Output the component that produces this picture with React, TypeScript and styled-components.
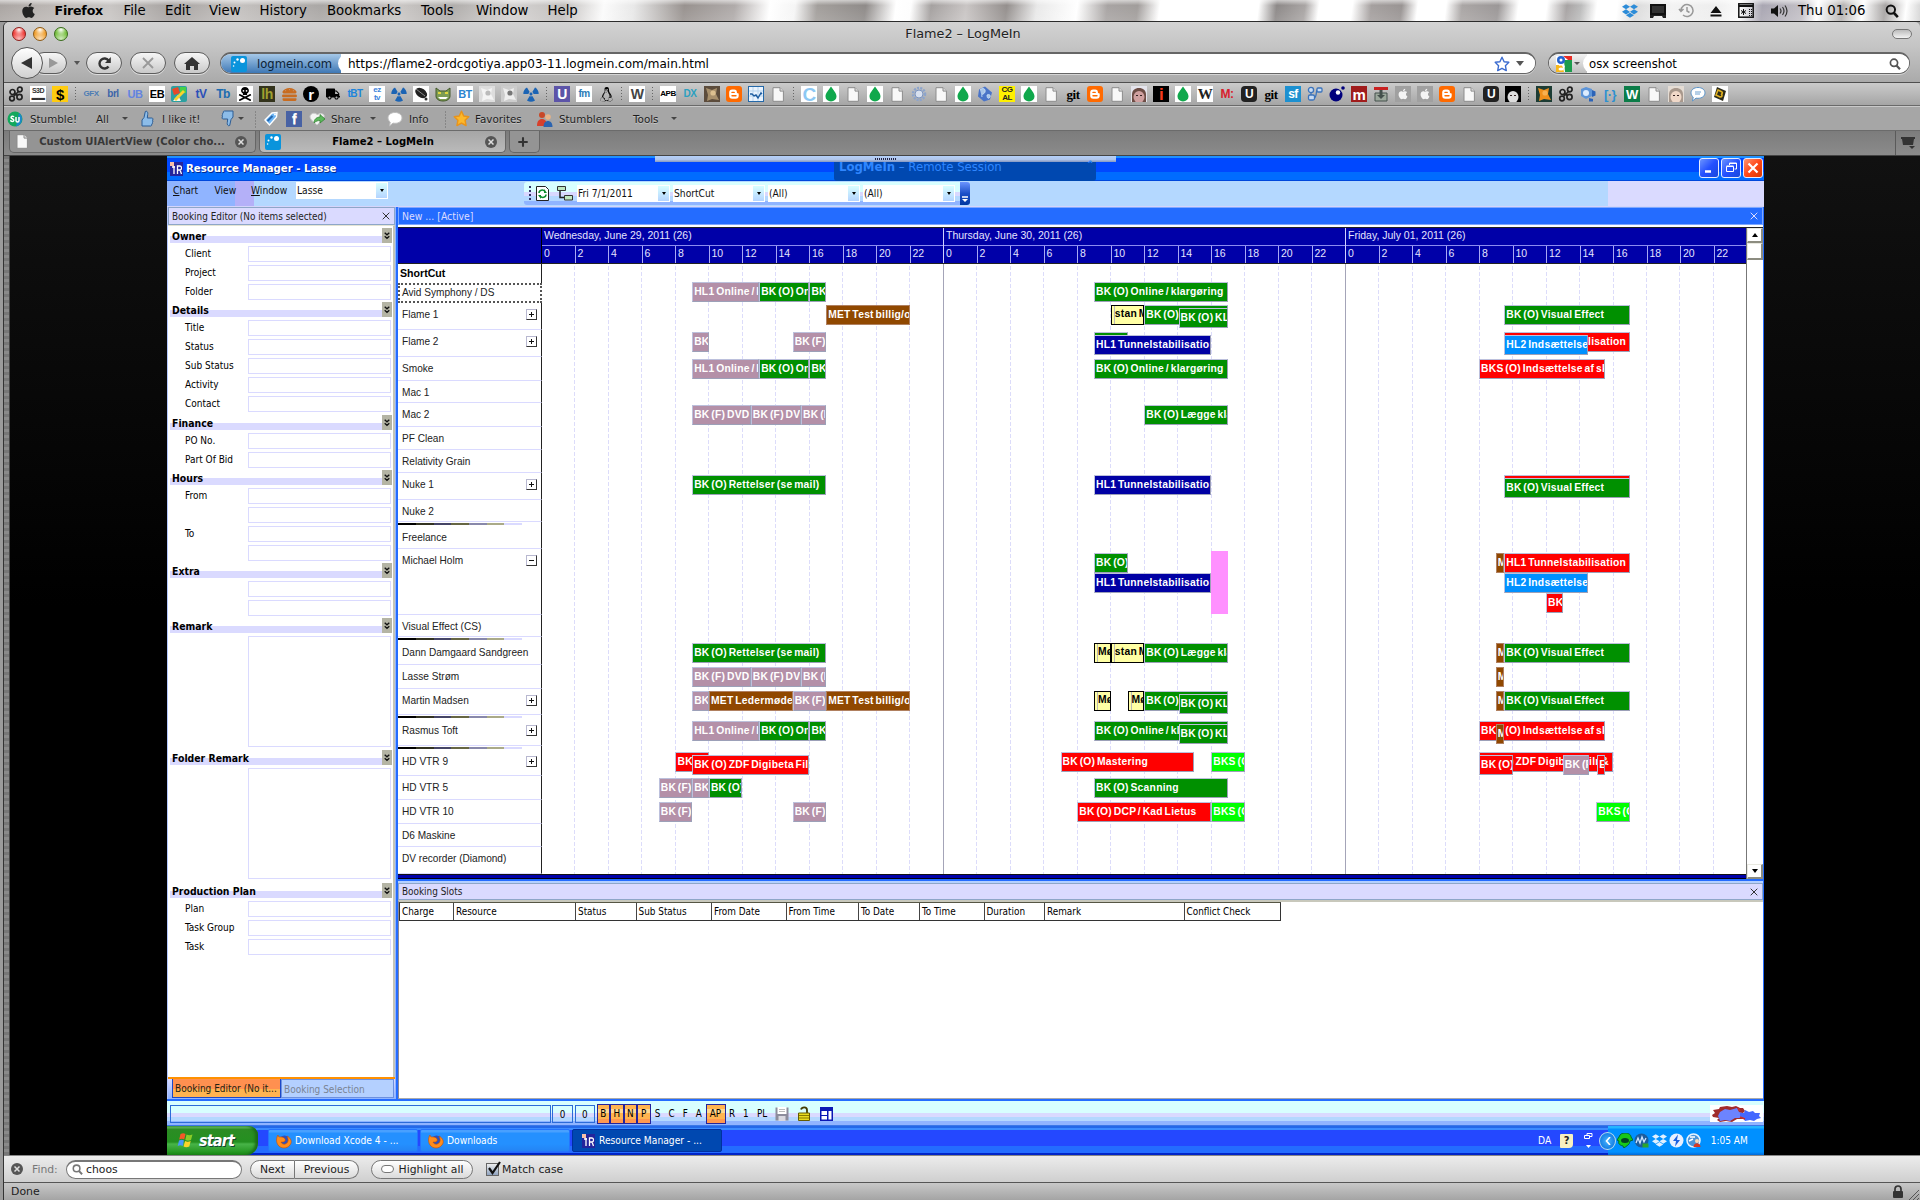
import React from 'react';
import styled, { createGlobalStyle, css } from 'styled-components';
import { FaApple, FaDropbox, FaRadiation, FaLinux, FaSkullCrossbones, FaHamburger, FaTruck } from 'react-icons/fa';

const MAC = '"DejaVu Sans", "Liberation Sans", sans-serif';
const XP = '"DejaVu Sans Condensed", "DejaVu Sans", sans-serif';
const ARIAL = '"Liberation Sans", Arial, sans-serif';

const Global = createGlobalStyle`
  * { box-sizing: border-box; }
  body { margin: 0; overflow: hidden; background: #9b9b9b; }
  svg { display: block; }
`;

/* ---------- generic pieces ---------- */

const Desktop = styled.div`
  width: 1920px; height: 1200px; display: flex; flex-direction: column;
  font-family: ${MAC}; color: #000; white-space: nowrap; overflow: hidden;
`;
const Slot = styled.div<{ $w: number; $center?: boolean }>`
  flex: none; width: ${p => p.$w}px; display: flex; align-items: center;
  justify-content: ${p => (p.$center ? 'center' : 'flex-start')};
`;
const Spacer = styled.div`flex: 1;`;
const Triangle = styled.i<{ $s: number; $c?: string; $up?: boolean }>`
  flex: none; width: 0; height: 0;
  border-left: ${p => p.$s}px solid transparent; border-right: ${p => p.$s}px solid transparent;
  ${p => (p.$up ? 'border-bottom' : 'border-top')}: ${p => p.$s * 1.3}px solid ${p => p.$c || '#000'};
`;

/* ---------- mac menu bar ---------- */

const MenuBar = styled.div`
  flex: none; height: 22px; display: flex; align-items: center; padding-left: 20px;
  border-bottom: 1px solid #2c2c2c; font-size: 13.3px;
  background:
    linear-gradient(180deg, rgba(255,255,255,.55), rgba(255,255,255,0) 25%, rgba(255,255,255,.12)),
    linear-gradient(97deg, #aaa5a2 0, #b9b4b1 40px, #c9c6c4 110px, #a7a3a1 170px, #c4c1bf 240px, #aaa7a5 320px,
      #c9c6c4 400px, #b0adab 450px, #d5d3d2 510px, #c2bfbd 560px, #fbfbfb 600px, #e8e8e8 630px, #98928f 680px, #b0abaa 730px,
      #fff 765px, #f5f5f5 790px, #a39f9c 812px, #8f8b89 860px, #fff 890px, #fdfdfd 905px, #a5a1a0 925px, #c9c5c4 960px,
      #948f8d 1000px, #e9e9e9 1030px, #fff 1070px, #a8a4a3 1100px, #a19d9b 1130px, #fff 1152px, #fff 1250px, #8d8988 1268px,
      #a9a5a4 1296px, #fff 1310px, #fff 1343px, #a5a09f 1362px, #999493 1392px, #fff 1408px, #fff 1436px, #aaa6a5 1452px,
      #9b9797 1488px, #fff 1508px, #fff 1536px, #a7a3a3 1556px, #bbb 1570px, #fff 1586px, #fff 1606px, #dcdcdc 1625px,
      #f3f3f3 1660px, #eee 1700px, #fafafa 1728px, #a9a6b2 1750px, #c3c0c6 1790px, #fff 1805px, #b5b2b1 1830px, #fff 1850px, #a7a4a3 1872px, #fff 1893px, #b3b3b3 1920px);
`;
const AppName = styled.b`letter-spacing: -0.2px; font-size: 12.6px;`;

/* ---------- browser chrome ---------- */

const Browser = styled.div`
  flex: 1; margin-left: 4px; display: flex; flex-direction: column; position: relative;
  border-top-left-radius: 5px; border-top-right-radius: 5px; overflow: hidden;
  background: linear-gradient(#d3d3d3, #c4c4c4 25px, #aaa 60px, #a6a6a6);
  box-shadow: -1px 0 0 #333;
`;
const TitleBar = styled.div`
  flex: none; height: 25px; display: grid; grid-template-columns: 120px 1fr 120px; align-items: center;
  font-size: 12.8px; padding: 0 6px 2px 8px;
`;
const Lights = styled.div`display: flex; gap: 7px;`;
const Light = styled.span<{ $c: string; $d: string }>`
  width: 14px; height: 14px; border-radius: 50%; border: 1px solid ${p => p.$d};
  background: radial-gradient(circle at 50% 15%, #fff 0, rgba(255,255,255,.2) 35%, transparent 50%),
    radial-gradient(circle at 50% 90%, #ffffffaa, transparent 60%), ${p => p.$c};
`;
const TitleText = styled.div`text-align: center; color: #222; text-shadow: 0 1px #ddd;`;
const Pill = styled.span`
  justify-self: end; width: 20px; height: 10px; border-radius: 5px; border: 1px solid #777;
  background: linear-gradient(#bbb, #f3f3f3); margin-right: 2px;
`;
const NavBar = styled.div`flex: none; height: 35px; display: flex; align-items: center; padding: 0 6px 3px 7px;`;
const Back = styled.div`
  width: 32px; height: 32px; border-radius: 50%; border: 1px solid #555; background: linear-gradient(#fff, #d0d0d0);
  display: flex; align-items: center; justify-content: center; z-index: 1;
`;
const NavButton = styled.div<{ $w?: number; $fwd?: boolean }>`
  width: ${p => p.$w || 36}px; height: 22px; border: 1px solid #5c5c5c; border-radius: 11px;
  background: linear-gradient(#f6f6f6, #c9c9c9); display: flex; align-items: center; justify-content: center;
  margin-right: ${p => (p.$fwd ? 0 : 8)}px;
  ${p => p.$fwd && css`margin-left: -10px; padding-left: 7px;`}
  box-shadow: 0 1px #ddd;
`;
const Field = styled.div<{ $w: number; $ml?: number }>`
  width: ${p => p.$w}px; margin-left: ${p => p.$ml || 0}px; height: 22px; border-radius: 11px; border: 1px solid #666; border-top-width: 2px;
  background: #fff; display: flex; align-items: center; overflow: hidden; font-size: 12px; box-shadow: 0 1px #d5d5d5;
`;
const Identity = styled.div`
  width: 120px; height: 100%; display: flex; align-items: center; gap: 10px; padding-left: 10px; font-size: 11.6px; color: #0b2236;
  background: linear-gradient(#a5c8e8, #3f78b5);
`;
const Url = styled.div<{ $search?: boolean }>`
  flex: 1; height: 100%; margin-left: ${p => (p.$search ? -4 : -3)}px; padding-left: ${p => (p.$search ? 6 : 10)}px;
  font-size: ${p => (p.$search ? 11.7 : 12)}px; border-radius: 10px 0 0 10px; background: #fff; display: flex; align-items: center;
`;
const Engine = styled.div`
  width: 38px; height: 100%; padding-left: 7px; display: flex; align-items: center; gap: 2px; background: linear-gradient(#f2f2f2, #bdbdbd);
`;
const BookmarkBar = styled.div`
  flex: none; height: 24px; display: flex; align-items: center; padding-left: 1px; border-top: 1px solid #4f4f4f;
  background: linear-gradient(#cbcbcb, #a5a5a5); border-bottom: 1px solid #6a6a6a;
`;
const BIcon = styled.div<{ $bg?: string; $fg?: string; $fs?: number; $serif?: boolean; $r?: number; $inner?: boolean }>`
  flex: none; width: 16px; height: 16px; margin: 0 ${p => (p.$inner ? 0 : 3)}px; border-radius: ${p => p.$r || 0}px;
  background: ${p => p.$bg || 'transparent'}; color: ${p => p.$fg || '#000'};
  font: 700 ${p => p.$fs || 10}px/1 ${p => (p.$serif ? '"Liberation Serif", serif' : ARIAL)};
  display: flex; align-items: center; justify-content: center; text-align: center; white-space: pre; letter-spacing: -0.5px;
`;
const DotSep = styled.i<{ $w?: number; $h?: number }>`
  flex: none; width: ${p => p.$w || 9}px; height: ${p => p.$h || 15}px; background: linear-gradient(#666 50%, transparent 50%) center/1px 3px repeat-y;
`;
const StumbleBar = styled.div`
  flex: none; height: 24px; display: flex; align-items: center; font-size: 10.35px; color: #1c1c1c; background: #a6a6a6;
  border-top: 1px solid #c9c9c9; padding-left: 3px; text-shadow: 0 1px #c4c4c4;
`;
const TabStrip = styled.div`
  flex: none; height: 26px; display: flex; align-items: flex-start; background: linear-gradient(#7c7c7c, #8b8b8b);
  border-top: 1px solid #6b6b6b; border-bottom: 1px solid #444; padding-left: 5px; font-size: 10.05px; font-weight: 700;
`;
const Tab = styled.div<{ $w: number; $on?: boolean }>`
  width: ${p => p.$w}px; height: 22px; margin-right: 3px; border: 1px solid #666; border-top: 0; border-radius: 0 0 5px 5px;
  display: flex; align-items: center; justify-content: space-between; padding: 0 8px 0 5px; position: relative;
  color: ${p => (p.$on ? '#000' : '#383838')}; background: ${p => (p.$on ? 'linear-gradient(#a6a6a6,#bababa)' : '#949494')};
`;
const CloseDot = styled.span`
  width: 12px; height: 12px; border-radius: 50%; background: #555; display: flex; align-items: center; justify-content: center;
`;
const TabList = styled.div`
  margin-left: auto; width: 25px; height: 24px; border-left: 1px solid #5a5a5a; display: flex; align-items: center; justify-content: center;
`;

/* ---------- page and remote desktop ---------- */

const Page = styled.div`
  flex: none; height: 999px; display: flex; background: linear-gradient(#111, #000 450px);
`;
const PageEdge = styled.div`
  width: 6px; background: repeating-linear-gradient(#777 0 3px, #8a8a8a 3px 6px); border-right: 1px solid #444; margin-right: 157px;
`;
const Remote = styled.div`width: 1597px; display: flex; flex-direction: column; position: relative; font: 10px ${XP}; background: #266dff;`;
const WinTitle = styled.div`
  flex: none; height: 25px; display: flex; align-items: center; padding: 0 1px 0 3px; color: #fff; font-size: 11.3px; font-weight: 700;
  background: linear-gradient(#1e90ff 0 2px, #0048ff 2px 16px, #006cff 16px 24px, #0048dc 24px); text-shadow: 1px 1px #002a90;
`;
const WinBtn = styled.span<{ $red?: boolean }>`
  width: 20px; height: 20px; margin: 0 0 2px 2px; border: 1px solid #e6ecff; border-radius: 3px; display: flex; align-items: center; justify-content: center;
  background: ${p => (p.$red ? 'linear-gradient(135deg,#ff9470,#ff4818 50%,#d83800)' : 'linear-gradient(135deg,#6c94ff,#2450ff 50%,#1848dc)')};
`;
const LmiStrip = styled.div`
  position: absolute; left: 488px; top: 0; width: 461px; height: 6px; background: linear-gradient(#b4d0fa, #b0c4e8 4px, #8da0c8 5px);
  display: flex; justify-content: center;
`;
const LmiDots = styled.i`width: 22px; height: 2px; margin-top: 2px; background: repeating-linear-gradient(90deg, #224 0 1px, transparent 1px 2px);`;
const LmiTab = styled.div`
  position: absolute; left: 667px; top: 6px; width: 262px; height: 19px; background: #0048b0; color: #2f86ff; padding: 0 3px 0 5px;
  display: flex; justify-content: space-between; font: 11.7px/11px ${MAC}; border-radius: 0 0 3px 3px;
`;
const AppMenu = styled.div`
  flex: none; height: 26px; display: flex; padding: 1px 0 0 6px; font-size: 10.2px; color: #111;
  background: linear-gradient(90deg, #90b4ff 0 68px, #b4b0f8 68px 87px, #b4d8ff 87px 1441px, #dadaff 1441px);
  border-bottom: 1px solid #d4d4fa;
`;
const MenuWord = styled.span<{ $w: number }>`width: ${p => p.$w}px; line-height: 17px;`;
const Combo = styled.div<{ $w: number; $mr?: number }>`
  width: ${p => p.$w}px; height: 17px; margin-right: ${p => p.$mr ?? 3}px; background: #fff; padding: 0 0 0 1px; display: flex; align-items: center; justify-content: space-between;
`;
const ComboArrow = styled.span`
  width: 11px; height: 15px; margin-right: 1px; background: linear-gradient(#d8ffff, #b4d4ff); display: flex; align-items: center; justify-content: center;
`;
const ToolGroup = styled.div`
  margin-left: 136px; width: 436px; height: 23px; display: flex; align-items: center; padding: 0 0 1px 5px; border-radius: 3px 0 0 3px;
  background: linear-gradient(#d8ffff 0 10px, #d8d8ff 10px 14px, #b4d8ff 14px 19px, #90b4ff 19px);
`;
const Grip = styled.i`width: 2px; height: 14px; margin-right: 5px; background: linear-gradient(#336 50%, transparent 50%) 0 0/2px 4px;`;
const ToolEnd = styled.span`
  width: 10px; height: 23px; border-radius: 0 3px 3px 0; background: linear-gradient(#6c94ff, #1c50c8 50%, #0036a0);
  display: flex; flex-direction: column; align-items: center; justify-content: flex-end; padding-bottom: 2px; gap: 1px;
`;
const WorkArea = styled.div`flex: none; height: 892px; display: flex; padding-left: 1px; background: #b4c8ff;`;
const PaneHead = styled.div<{ $on?: boolean; $h?: number }>`
  flex: none; height: ${p => p.$h || 18}px; display: flex; align-items: center; justify-content: space-between; padding: 0 4px 0 3px;
  font-size: ${p => (p.$on ? 10.4 : 9.9)}px;
  border: 1px solid ${p => (p.$on ? '#7ea8ff' : '#8ea6c8')}; background: ${p => (p.$on ? '#246cff' : '#dadaff')}; color: ${p => (p.$on ? '#dcdcff' : '#222')};
`;

/* ---------- booking editor ---------- */

const Editor = styled.div`width: 227px; display: flex; flex-direction: column;`;
const EditorBody = styled.div`
  flex: 1; background: #fff; border-right: 2px solid #c4c4b8; padding: 2px 1px 0 2px; border-top: 1px solid #e4e4d4;
`;
const Section = styled.div<{ $h: number }>`height: ${p => p.$h}px;`;
const SectionHead = styled.div`
  height: 18px; display: flex; align-items: flex-start; justify-content: space-between; padding-left: 2px;
  font-size: 10.4px; font-weight: 700; line-height: 17px; background: linear-gradient(transparent 8px, #dadaff 8px 15px, transparent 15px);
`;
const Chevron = styled.span`width: 10px; height: 15px; background: #b4b4a4; display: flex; align-items: center; justify-content: center;`;
const FormRow = styled.div<{ $h?: number }>`
  display: flex; justify-content: space-between; height: ${p => p.$h || 16}px; margin-bottom: 3px; padding: 0 1px 0 15px; line-height: 16px; font-size: 10px;
`;
const Input = styled.span`width: 143px; border: 1px solid #dadaff; background: #fff;`;
const EditorTabs = styled.div`
  height: 22px; display: flex; border-top: 2px solid #ff9000; padding-left: 4px; background: linear-gradient(#dadaff, #90b4ff);
`;
const EditorTab = styled.span<{ $on?: boolean }>`
  width: ${p => (p.$on ? 109 : 113)}px; height: 19px; padding-left: 2px; line-height: 20px; font-size: 10px; color: ${p => (p.$on ? '#221' : '#7a8494')};
  border: 1px solid ${p => (p.$on ? '#1c48c8' : '#6c90e0')}; border-top-width: ${p => (p.$on ? 0 : 1)}px;
  background: ${p => (p.$on ? 'linear-gradient(#ff9050 55%, #ffb450 55%)' : '#b4d0ff')};
`;
const Splitter = styled.div`width: 3px; background: linear-gradient(90deg, #90b4ff 1px, #246cff 1px);`;

/* ---------- chart ---------- */

const Main = styled.div`width: 1366px; display: flex; flex-direction: column; border-right: 1px solid #246cff; background: #fff;`;
const Chart = styled.div`flex: none; height: 652px; margin-top: 2px; display: flex; border-top: 1px solid #222;`;
const ChartMain = styled.div`width: 1349px; position: relative; overflow: hidden; border-right: 1px solid #777;`;
const ChartHead = styled.div`height: 36px; display: flex; background: #0000a8; border-bottom: 1px solid #222; font: 10.5px ${ARIAL}; color: #e4e4ff;`;
const HeadBlank = styled.div`width: 144px; flex: none; border-right: 1px solid #000;`;
const Day = styled.div<{ $first?: boolean }>`
  width: ${p => (p.$first ? 401 : 402)}px; flex: none; border-left: ${p => (p.$first ? 0 : 1)}px solid #d0d0ff;
`;
const DayName = styled.div`height: 18px; line-height: 15px; padding-left: 2px; border-bottom: 1px solid #8c8cf0;`;
const Hours = styled.div`display: flex; height: 17px;`;
const Hour = styled.span`flex: 1; line-height: 15px; padding-left: 2px; border-left: 1px solid #a8a8f4; &:first-child { border-left: 0; }`;
const Body = styled.div`position: relative; height: 610px;`;
const GridLines = styled.div`position: absolute; left: 143px; top: 0; bottom: 0; right: 0; display: flex;`;
const GridLine = styled.i<{ $day?: boolean; $none?: boolean }>`
  flex: none; width: 33.485px;
  background: ${p => (p.$none ? 'none' : p.$day ? 'linear-gradient(#a4a4b8, #a4a4b8)' : 'linear-gradient(#dcdcfa 62%, transparent 62%)')} 0 2px / 1px 6px repeat-y;
`;
const RowBox = styled.div<{ $h: number; $sep?: boolean }>`
  display: flex; height: ${p => p.$h}px; position: relative; margin-bottom: ${p => (p.$sep ? 4 : 0)}px;
`;
const RowLabel = styled.div<{ $sel?: boolean }>`
  flex: none; width: 144px; padding: 0 4px 0 4px; display: flex; justify-content: space-between; border-right: 1px solid #222; border-bottom: 1px solid #dadaff;
  font: 10.1px/24px ${ARIAL}; color: #222; background: #fff;
  ${p => p.$sel && css`border: 2px dotted #555; line-height: 16px; padding-left: 2px;`}
`;
const Group = styled.div`height: 19px; width: 144px; padding-left: 2px; font: 700 10.6px/18px ${ARIAL}; border-right: 1px solid #222;`;
const Divider = styled.i`
  position: absolute; left: 0; bottom: -4px; width: 144px; height: 4px; border-right: 1px solid #222; background:
  linear-gradient(90deg, #000 0 18px, #332 18px 36px, #446 36px 53px, #664 53px 71px, #88a 71px 89px, #aa8 89px 106px, #dadaff 106px 124px, #fff 124px) 0 1px/100% 2px no-repeat #fff;
`;
const Toggle = styled.span`
  width: 11px; height: 11px; margin-top: 6px; border: 1px solid #b8b8d0; border-right-color: #333; border-bottom-color: #333;
  display: flex; align-items: center; justify-content: center;
`;
const Lane = styled.div`position: relative; flex: 1;`;
const fills: Record<string, string> = {
  m: '#b490a8', g: '#009000', b: '#904800', n: '#0000a4', r: '#ff0000', s: '#0090ff', l: '#00ff00', y: '#ffffa4', p: '#ff90ff',
};
const Bar = styled.div<{ $c: string; $full?: boolean }>`
  position: absolute; height: ${p => (p.$full ? 63 : 20)}px; overflow: hidden; padding-left: 1px; font: 700 10.3px/18px ${ARIAL}; color: #fff;
  letter-spacing: 0.26px; word-spacing: -1.4px;
  border: 1px solid #9ca0b8; border-left-color: #bcc0dc; border-top-color: #bcc0dc; background: ${p => fills[p.$c]};
  ${p => p.$c === 'y' && css`border: 1px solid #000; color: #000; line-height: 15px; box-shadow: inset 2px 0 #ffffa4, inset 3px 0 #bbb; padding-left: 3px;`}
  ${p => (p.$c === 'p' || p.$c === 'b') && css`border-color: ${p.$c === 'p' ? '#ff90ff' : '#b08060'};`}
`;
const Footer = styled.div`position: absolute; left: 0; right: 0; bottom: 0; height: 5px; background: #0000a8; border-top: 1px solid #111; border-bottom: 1px solid #001;`;
const Scroll = styled.div`flex: 1; display: flex; flex-direction: column; justify-content: space-between; background: #fff;`;
const ScrollBtn = styled.span<{ $thumb?: boolean }>`
  height: ${p => (p.$thumb ? 17 : 15)}px; border: 1px solid #e8e8e0; border-right: 2px solid #8c8c80; border-bottom: 2px solid #8c8c80; background: #fff;
  display: flex; align-items: center; justify-content: center;
`;

/* ---------- slots table ---------- */

const SlotsGap = styled.div`flex: none; height: 4px; background: linear-gradient(#246cff 2px, #b4d0ff 2px);`;
const Table = styled.div`flex: 1; border-top: 2px solid #c8c8bc; border-left: 1px solid #889; border-bottom: 1px solid #aaa;`;
const TableHead = styled.div`display: flex; width: 882px; height: 19px; border: 1px solid #333; border-top: 1px solid #554;`;
const Th = styled.span<{ $w: number }>`flex: none; width: ${p => p.$w}px; padding-left: 2px; border-right: 1px solid #444; line-height: 17px; font-size: 9.9px; &:last-child { border: 0; }`;

/* ---------- status and task bars ---------- */

const AppStatus = styled.div`
  flex: none; height: 27px; display: flex; align-items: center; padding: 0 1px 0 3px; border-top: 2px solid #246cff;
  background: linear-gradient(#d8ffff 0 12px, #dadaff 12px 16px, #b4d8ff 16px 20px, #90b4ff 20px 24px, #3c78e8 24px); font-size: 9.8px;
`;
const StatusBox = styled.span<{ $w: number }>`
  width: ${p => p.$w}px; height: 18px; margin-right: 1.5px; border: 1px solid #2c6cd8; text-align: center; line-height: 17px;
`;
const Flag = styled.span<{ $on?: boolean; $w: number }>`
  width: ${p => p.$w}px; height: 20px; line-height: 20px; text-align: center;
  ${p => p.$on && css`border: 1px solid #24249c; line-height: 18px; background: linear-gradient(#ffb450 0 4px, #ffd890 4px 8px, #ffb450 8px 14px, #ff9850 14px);`}
`;
const CloudBox = styled.span`margin-left: auto; width: 53px; height: 17px; background: #fff;`;
const TaskBar = styled.div`
  flex: none; height: 29px; display: flex; align-items: center; color: #fff; font-size: 10.2px;
  background: linear-gradient(#2468e8 0 2px, #3c8cff 2px 4px, #2448ff 4px 20px, #246cff 20px 27px, #0024c8 27px);
`;
const Start = styled.div`
  width: 91px; height: 29px; border-radius: 0 9px 12px 0; display: flex; align-items: center; gap: 4px; padding-left: 10px; margin-right: 10px;
  font: italic 700 16px ${XP}; letter-spacing: -0.8px; text-shadow: 1px 1px #143; background: linear-gradient(#5cb458 0 2px, #2c8c24 3px, #249020 16px, #48b448 18px, #188c14);
  box-shadow: inset -3px 0 3px #1c6c18;
`;
const Task = styled.div<{ $on?: boolean }>`
  width: 150px; height: 23px; margin-right: 2px; border-radius: 2px; display: flex; align-items: center; gap: 3px; padding-left: 7px;
  background: ${p => (p.$on ? '#0048b0' : 'linear-gradient(#48a0ff 0 2px, #2490ff 3px 14px, #2484f4)')}; border: 1px solid ${p => (p.$on ? '#0030a0' : '#2474ff')};
`;
const Tray = styled.div`
  width: 156px; height: 29px; display: flex; align-items: center; background: linear-gradient(#24b4ff 0 2px, #0090ff 3px 26px, #0068d8); position: relative;
  padding-left: 9px; font-size: 10px;
`;
const TrayArrow = styled.span`
  position: absolute; left: -9px; top: 6px; width: 17px; height: 18px; border-radius: 50%; border: 1px solid #bde; background: radial-gradient(#48b4ff, #0068d8);
  display: flex; align-items: center; justify-content: center;
`;
const HelpNote = styled.b`
  width: 13px; height: 14px; background: #f8f0c0; color: #222; font-size: 11px; line-height: 14px; text-align: center; border-radius: 1px 1px 4px 1px;
`;

/* ---------- find bar ---------- */

const FindBar = styled.div`
  flex: none; height: 28px; display: flex; align-items: center; padding-left: 7px; font-size: 10.8px; background: linear-gradient(#ececec, #cfcfcf);
  border-top: 1px solid #888; border-bottom: 1px solid #555; color: #222;
`;
const FindLabel = styled.span`width: 34px; color: #777;`;
const FindInput = styled.div`
  width: 176px; height: 19px; border-radius: 10px; border: 1px solid #777; border-top-width: 2px; background: #fff; display: flex; align-items: center; gap: 3px; padding-left: 5px; margin-right: 8px;
`;
const PillBtn = styled.span<{ $w: number; $l?: boolean; $r?: boolean }>`
  width: ${p => p.$w}px; height: 19px; border: 1px solid #777; display: flex; align-items: center; justify-content: center; gap: 5px;
  background: linear-gradient(#fff, #dadada); border-radius: ${p => (p.$l ? '10px 0 0 10px' : p.$r ? '0 10px 10px 0' : '10px')};
  ${p => p.$r && css`border-left: 0; margin-right: 12px;`}
`;
const MiniPill = styled.i`width: 13px; height: 8px; border-radius: 4px; border: 1px solid #777; background: #fff;`;
const Check = styled.span`width: 13px; height: 13px; margin: 0 3px 0 13px; border: 1px solid #666; background: linear-gradient(#eee, #8fa3c0);`;
const CheckMark = styled.svg`margin-top: -3px;`;
const StatusLine = styled.div`
  flex: 1; display: flex; align-items: center; justify-content: space-between; padding: 0 1px 0 7px; font-size: 10.9px;
  background: linear-gradient(#c8c8c8, #a4a4a4); color: #1c1c1c;
`;
const ResizeGrip = styled.svg`margin: 5px 0 0 4px;`;

/* ---------- icons ---------- */

const Close = () => (
  <CloseDot><svg width="6" height="6" viewBox="0 0 6 6"><path d="m.5.500 5 5M5.500.5l-5 5" stroke="#ddd" strokeWidth="1.500" /></svg></CloseDot>
);
const Magnifier = ({ s = 12, c = '#444' }: { s?: number; c?: string }) => (
  <svg width={s} height={s} viewBox="0 0 12 12" fill="none" stroke={c}><circle cx="5" cy="4.8" r="3.6" strokeWidth="1.7" /><path d="M7.5 7.5 11 11.2" strokeWidth="2.2" /></svg>
);
const LmiLogo = () => (
  <svg width="16" height="16" viewBox="0 0 16 16"><rect width="16" height="16" rx="2" fill="#0a94dc" /><g fill="#fff"><circle cx="11.500" cy="4.500" r="2.500" /><circle cx="6.500" cy="3.500" r="1.200" /><circle cx="3.500" cy="6.500" r="1" /><circle cx="2.600" cy="10" r=".8" /></g></svg>
);
const Doc = () => (
  <svg width="14" height="15" viewBox="0 0 14 15"><path d="M2 .7h7l3.400 3.400v10.200H2z" fill="#f8f8f8" stroke="#8c8c8c" /><path d="M9 .7v3.400h3.400" fill="#ddd" stroke="#8c8c8c" /></svg>
);
const Drop = () => (
  <svg width="16" height="16" viewBox="0 0 16 16"><path d="M8 .5C11 5 13.500 7.300 13.500 10.500a5.500 5 0 0 1-11 0C2.500 7.300 5 5 8 .5z" fill="#10a84c" /></svg>
);
const Blogger = () => (
  <svg width="16" height="16" viewBox="0 0 16 16"><rect width="16" height="16" rx="3" fill="#ff6a00" /><path d="M6.200 3.500h2a2.700 2.700 0 0 1 2.700 2.700c0 .8.4 1 1.100 1.100.5.100.7.400.7.800v1.600a3 3 0 0 1-3 3H6.200a3 3 0 0 1-3-3V6.500a3 3 0 0 1 3-3z" fill="#fff" /><path d="M6 6.400h2.200M6 9.700h4" stroke="#ff6a00" strokeWidth="1.400" strokeLinecap="round" /></svg>
);
const Clover = () => (
  <svg width="16" height="16" viewBox="0 0 16 16" fill="none" stroke="#222" strokeWidth="1.700"><circle cx="4.500" cy="6" r="2.500" /><circle cx="11.800" cy="3.500" r="2.300" /><circle cx="4" cy="12.500" r="2.300" /><circle cx="11.500" cy="11" r="2.600" /><path d="m6.500 7.500 3 2M10.500 5.500l-5 5" /></svg>
);
const Globe = () => (
  <svg width="16" height="16" viewBox="0 0 16 16"><path d="m8 .5 7 6-2 7-6 2-6-5 1-7z" fill="#4a74c8" /><path d="M3 4c3-3 6-1 5 2s-4 1-3 5M10 9c2-1 4 0 3 2s-3 2-3-2z" fill="#a8c4e8" stroke="#cfe4f8" strokeWidth=".8" /></svg>
);
const Cube = () => (
  <svg width="16" height="16" viewBox="0 0 16 16"><path d="m6 1 6 2v7l-6 3-5-3V3z" fill="#5c94d8" /><circle cx="6" cy="7" r="3" fill="#dcecff" /><path d="m12 4 3.500 1.500v4L12 11zM9 12l4 1v2.500H9z" fill="#2c64b8" /></svg>
);
const Gear = () => (
  <svg width="16" height="16" viewBox="0 0 16 16" fill="none" stroke="#8ca4cc"><circle cx="8" cy="8" r="6" strokeWidth="2.500" strokeDasharray="2 1.200" /><circle cx="8" cy="8" r="4" fill="#d8e0ee" stroke="#7c94c0" /></svg>
);
const StockChart = () => (
  <svg width="16" height="16" viewBox="0 0 16 16"><rect x=".5" y=".5" width="15" height="15" fill="#eaf4ff" stroke="#2468a8" /><path d="M1 5h14M1 10h14M5 1v14M10 1v14" stroke="#b8d4ec" /><path d="M2 8h2l2 2 2-1 2 3 3-5 1 1" fill="none" stroke="#1c5ca0" strokeWidth="1.400" /></svg>
);
const Face = ({ bg, skin, hair = '#443430' }: { bg: string; skin: string; hair?: string }) => (
  <svg width="16" height="16" viewBox="0 0 16 16"><rect width="16" height="16" fill={bg} /><path d="M1 16V9c0-5 3-7 7-7s7 2 7 7v7z" fill={hair} /><ellipse cx="8" cy="11" rx="5.500" ry="6" fill={skin} /><path d="M5 9.500h2M9 9.500h2" stroke="#322" /></svg>
);
const Cat = () => (
  <svg width="16" height="16" viewBox="0 0 16 16"><path d="m1 2 4 3h6l4-3v8c0 3-3 5-7 5s-7-2-7-5z" fill="#7c9c54" stroke="#44582c" /><path d="M3 7h3M10 7h3" stroke="#ffe838" strokeWidth="1.600" /><path d="M3 11h10l-2 2H5z" fill="#fff" /></svg>
);
const Bot = () => (
  <svg width="16" height="16" viewBox="0 0 16 16"><circle cx="7" cy="9" r="6.500" fill="#00007c" /><circle cx="9" cy="6.500" r="2.200" fill="#fff" /><circle cx="14" cy="2" r="1.800" fill="#00007c" /></svg>
);
const Nodes = () => (
  <svg width="16" height="16" viewBox="0 0 16 16" fill="#c8dcf4" stroke="#3c74bc" strokeWidth="1.300"><circle cx="4" cy="4" r="2.600" /><rect x="1.500" y="9" width="6" height="5" rx="1.500" /><rect x="10" y="2" width="5" height="4" rx="1" /><path d="M4 6.500V9M7 12c3 0 2-8 3-8" fill="none" /></svg>
);
const Art = ({ a, b, c }: { a: string; b: string; c: string }) => (
  <svg width="16" height="16" viewBox="0 0 16 16"><rect width="16" height="16" fill={a} /><path d="m2 2 6 2 5-2-1 6 3 6-7-1-5 2 1-6z" fill={b} /><circle cx="9" cy="7" r="2.600" fill={c} /></svg>
);
const Tiles = () => (
  <svg width="16" height="16" viewBox="0 0 16 16"><rect width="16" height="16" rx="2" fill="#2ca0a0" /><path d="m1 3 6-2 2 6-6 2z" fill="#e84828" /><path d="M9 1h6v6H9z" fill="#48d048" /><path d="m2 15 5-6 3 6z" fill="#f4f4f4" /><path d="m3 13 9-9 2 2-9 9z" fill="#f8d42c" /></svg>
);
const Ball = () => (
  <svg width="16" height="16" viewBox="0 0 16 16"><rect width="16" height="16" fill="#fff" /><ellipse cx="7.500" cy="7" rx="6.500" ry="4.500" fill="#222" transform="rotate(35 8 8)" /><path d="m3 3 9 7" stroke="#888" /><circle cx="13" cy="13" r="1.500" fill="#333" /></svg>
);
const Press = () => (
  <svg width="16" height="16" viewBox="0 0 16 16"><path d="M1 1h14v3H1z" fill="#c82020" /><path d="M2 7h12v8H2z" fill="#9ca89c" stroke="#44504c" /><path d="M6.500 4h3v5H12l-4 4-4-4h2.500z" fill="#44504c" /></svg>
);
const Bill = () => (
  <svg width="16" height="16" viewBox="0 0 16 16"><rect width="16" height="16" fill="#fff" /><path d="m5 1 9 4-3 10-9-4z" fill="#2c2c1c" /><path d="m6 4 4 2c1 1 0 2-1 2 2 1 1 3-1 3L4 9z" fill="none" stroke="#e0b020" strokeWidth="1.600" /></svg>
);
const Bubble = ({ blue }: { blue?: boolean }) => (
  <svg width="16" height="16" viewBox="0 0 16 16"><path d="M8 1.500c4 0 7 2.200 7 5.400s-3 5.400-7 5.400c-.7 0-1.300 0-2-.2L2.500 15l.7-4C1.800 10 1 8.600 1 6.900 1 3.700 4 1.500 8 1.500z" fill="#fff" stroke={blue ? '#5c94c8' : '#bbb'} />{blue && <path d="M5 6h6M5 8h5" stroke="#6ca0d0" />}</svg>
);
const Thumb = ({ down }: { down?: boolean }) => (
  <svg width="17" height="17" viewBox="0 0 17 17"><g transform={down ? 'rotate(180 8.500 8.500)' : undefined}><path d="M3 16V10L5 7.500 6.300 1.500C8.500.5 9 3 8.700 4.500L8.300 8h4.500c1.500 0 1.500 2 .4 2.200 1.200.4.900 1.800-.2 2 1 .5.600 1.700-.4 1.900.4.900 0 1.900-1 1.900z" fill="#8cbce8" stroke="#2c5c94" /></g></svg>
);
const Star = ({ fill, stroke, s = 16 }: { fill: string; stroke: string; s?: number }) => (
  <svg width={s} height={s} viewBox="0 0 16 16"><path d="m8 1.200 2.100 4.500 4.700.6-3.400 3.400.9 4.900L8 12.300l-4.300 2.300.9-4.900L1.200 6.300l4.700-.6z" fill={fill} stroke={stroke} strokeWidth="1.400" strokeLinejoin="round" /></svg>
);
const Stumble = () => (
  <svg width="16" height="16" viewBox="0 0 16 16"><circle cx="8" cy="8" r="7.500" fill="#12a85c" /><path d="M12 2a7.500 7.500 0 0 1-3 13.400z" fill="#1c88c8" /><path d="M6.800 6.200c-.2-1.500-3-1.200-2.700.4.200 1.400 2.700.8 2.700 2.600 0 1.700-3 1.800-3.200 0M9 6v3.500c0 2 3 2 3 0V6" fill="none" stroke="#fff" strokeWidth="1.500" /></svg>
);
const Tag = () => (
  <svg width="16" height="16" viewBox="0 0 16 16"><path d="m2 9 7-7 5-.5L13.500 6l-7 8z" fill="#6cb4f4" stroke="#fff" strokeWidth="1.400" /><path d="m4.500 10 5-5" stroke="#2468b0" strokeWidth="2" /><circle cx="12" cy="3.500" r="1" fill="#fff" /></svg>
);
const ShareIcon = () => (
  <svg width="17" height="16" viewBox="0 0 17 16"><path d="M1 5c2-4 6-3 7.500-1C10 2 13 2 15 4c1 3-3 6-7 10C5 11 1 9 1 5z" fill="#f4f4f4" stroke="#ccc" /><path d="M5 12c0-4 3-6 6-6V3.500L16 8l-5 4V9.500c-2 0-4 .5-6 2.500z" fill="#5cb85c" stroke="#2c7c2c" strokeWidth=".7" /></svg>
);
const People = () => (
  <svg width="16" height="16" viewBox="0 0 16 16"><circle cx="5" cy="4" r="3" fill="#c84828" /><path d="M0 15c0-5 2-7 5-7s5 2 5 7z" fill="#d8402c" /><circle cx="11" cy="6" r="2.800" fill="#e8b488" /><path d="M6.500 16c0-4 2-6 4.500-6s4.500 2 4.500 6z" fill="#2c64b0" /></svg>
);
const RM = () => (
  <svg width="13" height="14" viewBox="0 0 13 14"><rect width="13" height="14" fill="#24249c" /><path d="M2 5h3M4 4v8M7.500 12V4H10c2 0 2 4 0 4H8m2 0 1.500 4" stroke="#fff" strokeWidth="1.300" fill="none" /><rect width="4" height="4" fill="#f8c0a8" /></svg>
);
const Fox = () => (
  <svg width="16" height="16" viewBox="0 0 16 16"><circle cx="8.500" cy="8" r="5.500" fill="#2c50c0" /><path d="M2 2c0 2 1 2 3 2 3 0 5 2 4 4-1 1.500-4 1-4 1 1 3 6 3 7-1 .6-2-1-5-1-5 4 2 5.500 6 3 9-3 4-9 4-12 0C0 9 0 5 2 2z" fill="#ff8c1c" stroke="#c85000" strokeWidth=".6" /></svg>
);
const WinFlag = () => (
  <svg width="18" height="17" viewBox="0 0 18 17"><path d="M3.500 2c2-1 3.500-1 5 0L7.200 7.500c-1.500-1-3-1-5 0z" fill="#f85828" /><path d="M9.500 2.500c2 1 3.500 1 6 0L14 8c-2 1-4 1-5.700 0z" fill="#8ccc28" /><path d="M2 8.500c2-1 3.500-1 5 0l-1.300 5.500c-1.500-1-3-1-5 0z" fill="#4898f8" /><path d="M8 9c2 1 3.500 1 5.700 0l-1.400 5.500c-2 1-4 1-5.700 0z" fill="#fcd428" /></svg>
);
const DoubleChevron = () => (
  <svg width="6" height="8" viewBox="0 0 6 8" fill="none" stroke="#111" strokeWidth="1.300"><path d="m.7.8 2.300 2 2.300-2M.7 4.300l2.300 2 2.300-2" /></svg>
);
const XMark = ({ c = '#333' }: { c?: string }) => (
  <svg width="8" height="8" viewBox="0 0 8 8" stroke={c}><path d="m.7.700 6.600 6.600M7.300.7.7 7.300" /></svg>
);
const GoogleG = () => (
  <svg width="16" height="16" viewBox="0 0 16 16"><rect width="16" height="16" fill="#fff" /><path d="M7 0h9v7z" fill="#e82c24" /><path d="M8 4h8v12H9z" fill="#1c9c4c" /><path d="M0 9h6l2 7H0z" fill="#f8b81c" /><circle cx="5" cy="4" r="4" fill="#2464d0" /><circle cx="5" cy="4" r="1.500" fill="#fff" /><path d="M3 9c5-1 6 2 4 2.500" stroke="#fff" strokeWidth="1.600" fill="none" /><ellipse cx="5" cy="13" rx="2.500" ry="1.600" fill="#fff" /></svg>
);
const Cloud = () => (
  <svg width="53" height="17" viewBox="0 0 53 17"><path d="m2 10 3-2-2-3 6-1 1-2 7-1 5 1 4-1 4 2 3 0 2 3-2 2 3 2-3 4-6 0-5 3-6-1-6 1-3-2 2-2-6-1z" fill="#a02c2c" /><path d="m8 11 2-4 5-3 5 1 7-2 2 4 4 1-2 5-6 0-5 3-5-1-5 1-1-3z" fill="#6c84ff" /><path d="m30 8 4 0 1-3 4 2 4-1 2 2 5 0-1 3 2 2-4 1-3 2-4-1-5 1-2-3-3-2z" fill="#4468ff" /><path d="M28 3l2 3M30 12l5 2" stroke="#c83030" strokeWidth="1.600" /></svg>
);
const Pulse = () => (
  <svg width="15" height="15" viewBox="0 0 15 15"><circle cx="7.500" cy="7.500" r="7" fill="#1c5c9c" /><path d="m2 10 2-5 2 5 2-6 2 5 2-4" fill="none" stroke="#cfe4ff" strokeWidth="1.300" /><path d="M8.500 10.500h6v4h-6z" fill="#2ca42c" /></svg>
);

/* ---------- data ---------- */

type B = [bg: string, fg: string, text: string, size?: number, serif?: boolean] | React.ReactNode | '|';
const bookmarks: B[] = [
  <Clover />, ['#fff', '#333', 'S3D\n▬▬', 7], ['#fc1', '#000', '$', 15], '|',
  ['', '#4c7cb4', 'GFX', 8], ['', '#3c64a8', 'brl', 10], ['', '#6484e0', 'UB', 11], ['#fff', '#000', 'EB', 11],
  <Tiles />, ['', '#2c50b8', 'tV', 12], ['', '#1c6cb0', 'Tb', 12],
  <BIcon $inner $bg="#fff"><FaSkullCrossbones size={14} /></BIcon>, ['#33331c', '#a0a030', 'lh', 14], <FaHamburger size={15} color="#c86c20" />, <BIcon $inner $bg="#000" $fg="#fff" $fs={15} $r={8}>r</BIcon>,
  <FaTruck size={14} />, ['', '#1c84dc', 'tBT', 10], ['#fff', '#3c84dc', 'ez\ntv', 8], <FaRadiation size={16} color="#1c64b4" />, <Ball />,
  <Cat />, ['#fff', '#2c84d0', 'BT', 11], <Art a="#ddd" b="#f4f4f4" c="#bbb" />, <Art a="#ccc" b="#eee" c="#777" />, <FaRadiation size={16} color="#1c64b4" />, '|',
  ['#5c54a8', '#fff', 'U', 14], ['#fff', '#2c7cb8', 'fm', 10], <FaLinux size={15} />, '|',
  ['#fff', '#444', 'W', 14], '|',
  ['#fff', '#000', 'APB', 8], ['', '#2ca0c0', 'DX', 10], <Art a="#5c4c3c" b="#a8906c" c="#dcc090" />, <Blogger />, <StockChart />, <Doc />, '|',
  ['#fff', '#8cc8f4', 'C', 19], 'drop', <Doc />, 'drop', <Doc />, <Gear />, <Doc />, 'drop', <Globe />, ['#fff000', '#222', 'CG\nAL', 8], 'drop', <Doc />,
  ['', '#000', 'git', 13, true], <Blogger />, <Doc />, <Face bg="#e4e4ec" skin="#d0a0a0" hair="#6c4c44" />, ['#000', '#f83c1c', 'i', 17], 'drop', ['#fff', '#222', 'W', 15, true],
  ['', '#d81c2c', 'M:', 12], <BIcon $inner $bg="#222" $fg="#fff" $fs={12} $r={4}>U</BIcon>, ['', '#000', 'git', 13, true],
  ['#1c90d0', '#fff', 'sf', 12], <Nodes />, <Bot />, ['#a01c1c', '#fff', 'm', 15], <Press />,
  <BIcon $inner $bg="#a0a0a0" $fg="#f4f4f4"><FaApple size={12} /></BIcon>, <BIcon $inner $bg="#a0a0a0" $fg="#f4f4f4"><FaApple size={12} /></BIcon>,
  <Blogger />, <Doc />, <BIcon $inner $bg="#222" $fg="#fff" $fs={12} $r={4}>U</BIcon>, <Face bg="#000" skin="#ddd" hair="#000" />, '|',
  <Art a="#1c3c34" b="#f0901c" c="#f8b050" />, <Clover />, <Cube />, ['', '#2c90d0', '[·}', 13], ['#0c7c48', '#fff', 'W', 13], <Doc />, <Face bg="#e4dcd4" skin="#f0d8c8" hair="#a8988c" />, <Bubble blue />,
  <Bill />,
];

const sections: { title: string; h: number; fields: (string | null)[]; tall?: boolean }[] = [
  { title: 'Owner', h: 74, fields: ['Client', 'Project', 'Folder'] },
  { title: 'Details', h: 113, fields: ['Title', 'Status', 'Sub Status', 'Activity', 'Contact'] },
  { title: 'Finance', h: 55, fields: ['PO No.', 'Part Of Bid'] },
  { title: 'Hours', h: 93, fields: ['From', null, 'To', null] },
  { title: 'Extra', h: 55, fields: [null, null] },
  { title: 'Remark', h: 132, fields: [null], tall: true },
  { title: 'Folder Remark', h: 133, fields: [null], tall: true },
  { title: 'Production Plan', h: 80, fields: ['Plan', 'Task Group', 'Task'] },
];

/* colour, day, from hour, to hour, text, vertical shift */
type Booking = [string, number, number, number, string, number?];
const online: Booking[] = [['m', 0, 9, 13, 'HL1 Online / klar'], ['g', 0, 13, 16, 'BK (O) Online'], ['g', 0, 16, 17, 'BK (O)']];
const dvd: Booking[] = [['m', 0, 9, 12.5, 'BK (F) DVD'], ['m', 0, 12.5, 15.5, 'BK (F) DVD'], ['m', 0, 15.5, 17, 'BK (F)']];
const rows: { name: string; h: number; t?: '+' | '−'; sep?: boolean; sel?: boolean; top?: number; b?: Booking[] }[] = [
  { name: 'Avid Symphony / DS', h: 20, sel: true, top: -1, b: [...online, ['g', 1, 9, 17, 'BK (O) Online / klargøring']] },
  { name: 'Flame 1', h: 27, t: '+', b: [['b', 0, 17, 22, 'MET Test billig/o'], ['y', 1, 10, 12, 'stan Ma'], ['g', 1, 12, 17, 'BK (O)'], ['g', 1, 14.05, 17, 'BK (O) KLA', 3], ['g', 2, 9.5, 17, 'BK (O) Visual Effect']] },
  { name: 'Flame 2', h: 27, t: '+', b: [['m', 0, 9, 10, 'BK (F)'], ['m', 0, 15, 17, 'BK (F)'], ['g', 1, 9, 11, ''], ['n', 1, 9, 16, 'HL1 Tunnelstabilisation', 3], ['r', 2, 9.5, 17, 'HL1 Tunnelstabilisation'], ['s', 2, 9.5, 14.5, 'HL2 Indsættelse', 3]] },
  { name: 'Smoke', h: 24, b: [...online, ['g', 1, 9, 17, 'BK (O) Online / klargøring'], ['r', 2, 8, 15.5, 'BKS (O) Indsættelse af sk']] },
  { name: 'Mac 1', h: 22 },
  { name: 'Mac 2', h: 24, b: [...dvd, ['g', 1, 12, 17, 'BK (O) Lægge kla']] },
  { name: 'PF Clean', h: 23 },
  { name: 'Relativity Grain', h: 23 },
  { name: 'Nuke 1', h: 27, t: '+', b: [['g', 0, 9, 17, 'BK (O) Rettelser (se mail)'], ['n', 1, 9, 16, 'HL1 Tunnelstabilisation'], ['r', 2, 9.5, 17, ''], ['g', 2, 9.5, 17, 'BK (O) Visual Effect', 3]] },
  { name: 'Nuke 2', h: 22, sep: true },
  { name: 'Freelance', h: 23 },
  { name: 'Michael Holm', h: 66, t: '−', b: [['g', 1, 9, 11, 'BK (O)', 2], ['n', 1, 9, 16, 'HL1 Tunnelstabilisation', 22], ['p', 1, 16, 17, '', 0], ['b', 2, 9, 9.5, ' M', 2], ['r', 2, 9.5, 17, 'HL1 Tunnelstabilisation', 2], ['s', 2, 9.5, 14.5, 'HL2 Indsættelse', 22], ['r', 2, 12, 13, 'BK (O)', 42]] },
  { name: 'Visual Effect (CS)', h: 22, sep: true },
  { name: 'Dann Damgaard Sandgreen', h: 24, b: [['g', 0, 9, 17, 'BK (O) Rettelser (se mail)'], ['y', 1, 9, 10, 'Mø'], ['y', 1, 10, 12, 'stan Ma'], ['g', 1, 12, 17, 'BK (O) Lægge kla'], ['b', 2, 9, 9.5, ' M'], ['g', 2, 9.5, 17, 'BK (O) Visual Effect']] },
  { name: 'Lasse Strøm', h: 24, b: [...dvd, ['b', 2, 9, 9.5, ' M']] },
  { name: 'Martin Madsen', h: 26, t: '+', sep: true, b: [['m', 0, 9, 10, 'BK (F)'], ['b', 0, 10, 15, 'MET Ledermøde'], ['m', 0, 15, 17, 'BK (F)'], ['b', 0, 17, 22, 'MET Test billig/o'], ['y', 1, 9, 10, 'Mø'], ['y', 1, 11, 12, 'Mø'], ['g', 1, 12, 17, 'BK (O)'], ['g', 1, 14.05, 17, 'BK (O) KLA', 3], ['b', 2, 9, 9.5, ' M'], ['g', 2, 9.5, 17, 'BK (O) Visual Effect']] },
  { name: 'Rasmus Toft', h: 27, t: '+', sep: true, b: [...online, ['g', 1, 9, 17, 'BK (O) Online / klargøring'], ['g', 1, 14.05, 17, 'BK (O) KLA', 3], ['r', 2, 8, 15.5, 'BKS (O) Indsættelse af sk'], ['b', 2, 9, 9.5, ' M', 3]] },
  { name: 'HD VTR 9', h: 26, t: '+', b: [['r', 0, 8, 10, 'BK (O)'], ['r', 0, 9, 16, 'BK (O) ZDF Digibeta Film', 3], ['r', 1, 7, 15, 'BK (O) Mastering'], ['l', 1, 16, 18, 'BKS (O)'], ['r', 2, 8, 16, 'BK (O) ZDF Digibeta Filr &'], ['r', 2, 8, 10, 'BK (O)', 3], ['m', 2, 13, 14.55, 'BK (F)', 3], ['r', 2, 15.05, 15.5, 'E', 3]] },
  { name: 'HD VTR 5', h: 24, b: [['m', 0, 7, 9, 'BK (F)'], ['m', 0, 9, 10, 'BK (F)'], ['g', 0, 10, 12, 'BK (O)'], ['g', 1, 9, 17, 'BK (O) Scanning']] },
  { name: 'HD VTR 10', h: 24, b: [['m', 0, 7, 9, 'BK (F)'], ['m', 0, 15, 17, 'BK (F)'], ['r', 1, 8, 16, 'BK (O) DCP / Kad Lietus'], ['l', 1, 16, 18, 'BKS (O)'], ['l', 2, 15, 17, 'BKS (O)']] },
  { name: 'D6 Maskine', h: 23 },
  { name: 'DV recorder (Diamond)', h: 27 },
];
const HOUR = 16.743;
const days = ['Wednesday, June 29, 2011 (26)', 'Thursday, June 30, 2011 (26)', 'Friday, July 01, 2011 (26)'];
const hours = [0, 2, 4, 6, 8, 10, 12, 14, 16, 18, 20, 22];
const columns: [string, number][] = [['Charge', 54], ['Resource', 122], ['Status', 60.5], ['Sub Status', 75.5], ['From Date', 74.5], ['From Time', 72.5], ['To Date', 61], ['To Time', 64.5], ['Duration', 60.5], ['Remark', 139.5], ['Conflict Check', 95]];
const macMenus: [string, number][] = [['File', 41.5], ['Edit', 44], ['View', 50.5], ['History', 67.5], ['Bookmarks', 94], ['Tools', 55], ['Window', 71.5], ['Help', 40]];

function BookmarkItem({ b }: { b: B }) {
  if (b === '|') return <DotSep />;
  if (b === 'drop') return <BIcon $bg="#fff"><Drop /></BIcon>;
  if (Array.isArray(b)) {
    const [bg, fg, text, size, serif] = b as [string, string, string, number, boolean];
    return <BIcon $bg={bg} $fg={fg} $fs={size} $serif={serif}>{text}</BIcon>;
  }
  return <BIcon>{b as React.ReactNode}</BIcon>;
}

function Bookings({ items, top }: { items: Booking[]; top: number }) {
  return (
    <Lane>
      {items.map(([c, day, a, b, text, dy], i) => (
        <Bar key={i} $c={c} $full={c === 'p'}
          style={{ left: day * 24 * HOUR + a * HOUR - 0.5, width: (b - a) * HOUR, top: top + (dy ?? 0) }}>
          {text}
        </Bar>
      ))}
    </Lane>
  );
}

function MacMenu() {
  return (
    <MenuBar>
      <Slot $w={34.5}><FaApple size={17} color="#222" /></Slot>
      <Slot $w={69}><AppName>Firefox</AppName></Slot>
      {macMenus.map(([m, w]) => <Slot key={m} $w={w}>{m}</Slot>)}
      <Spacer />
      <Slot $w={27} $center><FaDropbox size={16} color="#2c8cd8" /></Slot>
      <Slot $w={29} $center><svg width="18" height="15" viewBox="0 0 18 15"><path d="M1 1h16v11H1z" fill="#111" /><path d="M3 3h12v7H3z" fill="#333" /><path d="M1 12v3h3l1-2h8l1 2h3v-3" fill="#222" /></svg></Slot>
      <Slot $w={29} $center><svg width="17" height="15" viewBox="0 0 17 15" fill="none" stroke="#999" strokeWidth="1.500"><path d="M3 7.500a6 6 0 1 1 2 4.500M1 6l2 2.500L5.500 6M9 4v4l2.500 1.500" /></svg></Slot>
      <Slot $w={30} $center><svg width="12" height="12" viewBox="0 0 12 12"><path d="m6 1 5.500 7H.5zM.5 9.500h11v2H.5z" fill="#111" /></svg></Slot>
      <Slot $w={30} $center><svg width="16" height="15" viewBox="0 0 16 15"><rect x=".8" y=".8" width="14.400" height="13.400" fill="none" stroke="#111" strokeWidth="1.500" /><path d="M1 3h14" stroke="#111" strokeWidth="2" /><path d="M5.500 6v6M3 7.500l5 3M8 7.500l-5 3" stroke="#111" /><path d="M11.500 6v7M13.500 6v7" stroke="#111" strokeDasharray="1 1" /></svg></Slot>
      <Slot $w={37} $center><svg width="17" height="14" viewBox="0 0 17 14"><path d="M0 4.500h3l4-3.500v12L3 9.500H0z" fill="#111" /><path d="M9 4.500q2 2.500 0 5M11.500 3q3 4 0 8M14 1.500q4 5.500 0 11" fill="none" stroke="#333" strokeWidth="1.200" /></svg></Slot>
      <Slot $w={87}>Thu 01:06</Slot>
      <Slot $w={35}><Magnifier s={14} c="#111" /></Slot>
    </MenuBar>
  );
}

function Chrome() {
  return (
    <>
      <TitleBar>
        <Lights><Light $c="#f0403c" $d="#8c2420" /><Light $c="#f0a030" $d="#8c5c1c" /><Light $c="#78c040" $d="#3c6c20" /></Lights>
        <TitleText>Flame2 – LogMeIn</TitleText>
        <Pill />
      </TitleBar>
      <NavBar>
        <Back><svg width="12" height="12" viewBox="0 0 12 12"><path d="M11 0v12L0 6z" fill="#333" /></svg></Back>
        <NavButton $fwd $w={34}><svg width="9" height="10" viewBox="0 0 9 10"><path d="M0 0v10l9-5z" fill="#999" /></svg></NavButton>
        <Slot $w={19} $center><Triangle $s={3.5} $c="#555" /></Slot>
        <NavButton><svg width="15" height="15" viewBox="0 0 15 15"><path d="M11.500 10.500a5 5 0 1 1 0-6" fill="none" stroke="#333" strokeWidth="2.400" /><path d="M13.800 1v6H8z" fill="#333" /></svg></NavButton>
        <NavButton><svg width="12" height="12" viewBox="0 0 12 12"><path d="m1 1 10 10M11 1 1 11" stroke="#999" strokeWidth="1.800" /></svg></NavButton>
        <NavButton><svg width="16" height="13" viewBox="0 0 16 13"><path d="m8 0 8 7h-2v6h-4V9H6v4H2V7H0z" fill="#333" /></svg></NavButton>
        <Field $w={1316} $ml={2}>
          <Identity><LmiLogo />logmein.com</Identity>
          <Url>https://flame2-ordcgotiya.app03-11.logmein.com/main.html<Spacer /><Star fill="#fff" stroke="#3c6cd0" /><Slot $w={20} $center><Triangle $s={4.5} $c="#555" /></Slot><Slot $w={5} /></Url>
        </Field>
        <Field $w={362} $ml={12}>
          <Engine><GoogleG /><Triangle $s={3} $c="#555" /></Engine>
          <Url $search>osx screenshot<Spacer /><Slot $w={20}><Magnifier c="#555" /></Slot></Url>
        </Field>
      </NavBar>
      <BookmarkBar>{bookmarks.map((b, i) => <BookmarkItem key={i} b={b} />)}</BookmarkBar>
      <StumbleBar>
        <Slot $w={23}><Stumble /></Slot><Slot $w={66}>Stumble!</Slot><Slot $w={26}>All</Slot><Slot $w={17}><Triangle $s={3} $c="#444" /></Slot>
        <Slot $w={23}><Thumb /></Slot><Slot $w={57}>I like it!</Slot><Slot $w={19}><Thumb down /></Slot><Slot $w={9}><Triangle $s={3} $c="#444" /></Slot>
        <DotSep $w={16} $h={18} /><Slot $w={23}><Tag /></Slot>
        <Slot $w={23}><BIcon $inner $bg="#4862a4" $fg="#fff" $fs={14}>f</BIcon></Slot><Slot $w={22}><ShareIcon /></Slot><Slot $w={39}>Share</Slot><Slot $w={17}><Triangle $s={3} $c="#444" /></Slot>
        <Slot $w={22}><Bubble /></Slot><Slot $w={28}>Info</Slot><DotSep $w={16} $h={18} /><Slot $w={22}><Star fill="#fcb82c" stroke="#e8941c" s={17} /></Slot><Slot $w={62}>Favorites</Slot>
        <Slot $w={22}><People /></Slot><Slot $w={74}>Stumblers</Slot><Slot $w={38}>Tools</Slot><Triangle $s={3} $c="#444" />
      </StumbleBar>
      <TabStrip>
        <Tab $w={247}><Doc />Custom UIAlertView (Color cho...<Close /></Tab>
        <Tab $w={247} $on><LmiLogo />Flame2 – LogMeIn<Close /></Tab>
        <Tab $w={31}><svg width="17" height="10" viewBox="0 0 17 10"><path d="M8.500 0v10M3.500 5h10" stroke="#333" strokeWidth="2.200" /></svg></Tab>
        <TabList><svg width="15" height="13" viewBox="0 0 15 13"><path d="M0 0h14v2h-1l-1 6H2L1 2H0z" fill="#333" /><path d="M8 9h6l-3 3z" fill="#333" /></svg></TabList>
      </TabStrip>
    </>
  );
}

function EditorPane() {
  return (
    <Editor>
      <PaneHead>Booking Editor (No items selected)<XMark /></PaneHead>
      <EditorBody>
        {sections.map(s => (
          <Section key={s.title} $h={s.h}>
            <SectionHead>{s.title}<Chevron><DoubleChevron /></Chevron></SectionHead>
            {s.fields.map((f, i) => <FormRow key={i} $h={s.tall ? 111 : 16}>{f || <span />}<Input /></FormRow>)}
          </Section>
        ))}
      </EditorBody>
      <EditorTabs><EditorTab $on>Booking Editor (No it...</EditorTab><EditorTab>Booking Selection</EditorTab></EditorTabs>
    </Editor>
  );
}

function ChartPane() {
  return (
    <Chart>
      <ChartMain>
        <ChartHead>
          <HeadBlank />
          {days.map((d, i) => (
            <Day key={d} $first={i === 0}><DayName>{d}</DayName><Hours>{hours.map(h => <Hour key={h}>{h}</Hour>)}</Hours></Day>
          ))}
        </ChartHead>
        <Body>
          <GridLines>{days.map((d, k) => hours.map(h => <GridLine key={d + h} $day={h === 0} $none={h === 0 && k === 0} />))}</GridLines>
          <Group>ShortCut</Group>
          {rows.map(r => (
            <RowBox key={r.name} $h={r.h} $sep={r.sep}>
              <RowLabel $sel={r.sel}>{r.name}{r.t && <Toggle><svg width="5" height="5" viewBox="0 0 5 5" stroke="#111"><path d={r.t === '+' ? 'M0 2.500h5M2.500 0v5' : 'M0 2.500h5'} /></svg></Toggle>}</RowLabel>
              {r.b && <Bookings items={r.b} top={r.top ?? 2} />}
              {r.sep && <Divider />}
            </RowBox>
          ))}
        </Body>
        <Footer />
      </ChartMain>
      <Scroll>
        <div><ScrollBtn><Triangle $s={3.5} $up /></ScrollBtn><ScrollBtn $thumb /></div>
        <ScrollBtn><Triangle $s={3.5} /></ScrollBtn>
      </Scroll>
    </Chart>
  );
}

function RemoteDesktop() {
  return (
    <Remote>
      <WinTitle>
        <Slot $w={16}><RM /></Slot>Resource Manager - Lasse<Spacer />
        <WinBtn><svg width="10" height="10"><path d="M1 8.500h6" stroke="#fff" strokeWidth="2.500" /></svg></WinBtn>
        <WinBtn><svg width="11" height="11" fill="none" stroke="#fff"><path d="M3.500 3V1h7v6h-2M.5 4.500h7v5h-7zM.5 4h7M3.500 1.500h7" /></svg></WinBtn>
        <WinBtn $red><svg width="12" height="12"><path d="m1.500 1.500 9 9M10.500 1.500l-9 9" stroke="#fff" strokeWidth="2.200" /></svg></WinBtn>
      </WinTitle>
      <LmiStrip><LmiDots /></LmiStrip>
      <LmiTab><span><b>LogMeIn</b> – Remote Session</span><b>ˆ</b></LmiTab>
      <AppMenu>
        <MenuWord $w={41.5}><u>C</u>hart</MenuWord><MenuWord $w={36.5}>View</MenuWord><MenuWord $w={45}><u>W</u>indow</MenuWord>
        <Combo $w={92} $mr={0}>Lasse<ComboArrow><Triangle $s={2.5} /></ComboArrow></Combo>
        <ToolGroup>
          <Grip />
          <Slot $w={21}><svg width="13" height="15" viewBox="0 0 13 15"><path d="M.5.5h9l3 3v11H.5z" fill="#fff" stroke="#222" /><path d="M3 7c0-3 4-4 6-1.500M10 8.500c0 3-4 4-6 1.500" fill="none" stroke="#0c8c2c" strokeWidth="1.500" /><path d="M8 3v4h3zM2 9h3v4z" fill="#0c8c2c" /></svg></Slot>
          <Slot $w={20}><svg width="16" height="15" viewBox="0 0 16 15"><path d="M.5.5h8v4h-8zM7.500 9.500h8v4.500h-8z" fill="#bfe8c0" stroke="#333" /><path d="M3 5v6.500h4" fill="none" stroke="#222" strokeWidth="1.500" /></svg></Slot>
          <Combo $w={93}>Fri 7/1/2011<ComboArrow><Triangle $s={2.5} /></ComboArrow></Combo>
          <Combo $w={92}>ShortCut<ComboArrow><Triangle $s={2.5} /></ComboArrow></Combo>
          <Combo $w={92}>(All)<ComboArrow><Triangle $s={2.5} /></ComboArrow></Combo>
          <Combo $w={92}>(All)<ComboArrow><Triangle $s={2.5} /></ComboArrow></Combo>
        </ToolGroup>
        <ToolEnd><svg width="6" height="7"><path d="M0 1h6" stroke="#fff" strokeWidth="1.500" /><path d="M0 3h6L3 6z" fill="#fff" /></svg></ToolEnd>
      </AppMenu>
      <WorkArea>
        <EditorPane />
        <Splitter />
        <Main>
          <PaneHead $on>New ... [Active]<XMark c="#dcdcff" /></PaneHead>
          <ChartPane />
          <SlotsGap />
          <PaneHead $h={17}>Booking Slots<XMark /></PaneHead>
          <Table><TableHead>{columns.map(([c, w]) => <Th key={c} $w={w}>{c}</Th>)}</TableHead></Table>
        </Main>
      </WorkArea>
      <AppStatus>
        <StatusBox $w={380.5} /><StatusBox $w={21}>0</StatusBox><StatusBox $w={20.5}>0</StatusBox>
        <Flag $on $w={13.5}>B</Flag><Flag $on $w={13.5}>H</Flag><Flag $on $w={13.5}>N</Flag><Flag $on $w={13.5}>P</Flag>
        <Flag $w={14}>S</Flag><Flag $w={14}>C</Flag><Flag $w={13.5}>F</Flag><Flag $w={13.5}>A</Flag><Flag $on $w={20}>AP</Flag><Flag $w={13}>R</Flag><Flag $w={14.5}>1</Flag><Flag $w={18}>PL</Flag>
        <Slot $w={22} $center><svg width="14" height="14"><path d="M.5.5h13v13H.5z" fill="#8c8c9c" /><path d="M2.500 0h9v7h-9z" fill="#fff" /><path d="M3.500 9h7v5h-7z" fill="#d8d8e0" /><path d="M4 2.500h6M4 4.500h6" stroke="#bbb" /></svg></Slot>
        <Slot $w={22} $center><svg width="12" height="15"><path d="M3 3.500C4 .5 9 .5 9 4v3" fill="none" stroke="#443c00" strokeWidth="1.800" /><path d="M.5 7h11v7.500H.5z" fill="#e8dc20" stroke="#665c00" /><path d="M1 9.500h10M1 12h10" stroke="#887c00" /></svg></Slot>
        <Slot $w={22} $center><svg width="13" height="14"><path d="M0 0h13v14H0z" fill="#0c18b4" /><path d="M1.500 4h5.500v4H1.500zM1.500 9h5.500v3.500H1.500zM8.500 4h3v8.500h-3z" fill="#fff" /></svg></Slot>
        <CloudBox><Cloud /></CloudBox>
      </AppStatus>
      <TaskBar>
        <Start><WinFlag />start</Start>
        <Task><Fox />Download Xcode 4 - ...</Task>
        <Task><Fox />Downloads</Task>
        <Task $on><Slot $w={16} $center><RM /></Slot>Resource Manager - ...</Task>
        <Spacer />
        <Slot $w={22}>DA</Slot>
        <Slot $w={24}><HelpNote>?</HelpNote></Slot>
        <Slot $w={24}><svg width="10" height="16" fill="none" stroke="#fff"><path d="M3 2.500V.5h5v3H6M.5 2.500h5v3h-5z" /><path d="M2 12h5l-2.500 3z" fill="#fff" stroke="none" /></svg></Slot>
        <Tray>
          <TrayArrow><svg width="6" height="8"><path d="M5 0 1.500 4 5 8" fill="none" stroke="#fff" strokeWidth="1.600" /></svg></TrayArrow>
          <Slot $w={17.3}><svg width="16" height="15"><path d="M8 0c4 0 6 2 6 4l2 3-3 1c0 4-4 5-6 7l-1-2C2 12 1 10 2 8L0 7l2-3c1-3 3-4 6-4z" fill="#18c818" stroke="#063" /><ellipse cx="8" cy="7.500" rx="4" ry="2.500" fill="#042" /></svg></Slot>
          <Slot $w={17.3}><Pulse /></Slot>
          <Slot $w={17.3}><FaDropbox size={15} color="#dff0ff" /></Slot>
          <Slot $w={17.3}><svg width="15" height="15"><circle cx="7.500" cy="7.500" r="7" fill="#e8f0ff" /><path d="M9 1.500 4 8h3l-1 5.500L11 7H8z" fill="#1c60e0" /></svg></Slot>
          <Slot $w={24.5}><svg width="15" height="15"><circle cx="7.500" cy="7.500" r="6.500" fill="#4c94d8" stroke="#e8f4ff" strokeWidth="1.500" /><path d="M4 4h5M3 8l4-2" stroke="#fff" strokeWidth="1.500" /><circle cx="11" cy="8" r="2" fill="#f8d8b8" /><path d="M7.500 14c0-5 7-5 7 0z" fill="#d83820" /></svg></Slot>
          1:05 AM
        </Tray>
      </TaskBar>
    </Remote>
  );
}

export default function App() {
  return (
    <Desktop>
      <Global />
      <MacMenu />
      <Browser>
        <Chrome />
        <Page><PageEdge /><RemoteDesktop /></Page>
        <FindBar>
          <Slot $w={21}><Close /></Slot><FindLabel>Find:</FindLabel>
          <FindInput><Magnifier s={11} c="#777" />choos</FindInput>
          <PillBtn $w={45} $l>Next</PillBtn><PillBtn $w={64} $r>Previous</PillBtn>
          <PillBtn $w={102}><MiniPill />Highlight all</PillBtn>
          <Check><CheckMark width="15" height="15" viewBox="0 0 15 15"><path d="m2 7 3.500 5L13 1" fill="none" stroke="#111" strokeWidth="2.200" /></CheckMark></Check>Match case
        </FindBar>
        <StatusLine>Done
          <Slot $w={27}><svg width="12" height="14" viewBox="0 0 12 14"><path d="M3 7V4c0-4 6-4 6 0v3" fill="none" stroke="#333" strokeWidth="1.700" /><rect x="1" y="6" width="10" height="7" rx="1" fill="#333" /></svg><ResizeGrip width="11" height="11" viewBox="0 0 11 11"><path d="M1 11 11 1M5 11l6-6M9 11l2-2" stroke="#555" /></ResizeGrip></Slot>
        </StatusLine>
      </Browser>
    </Desktop>
  );
}
